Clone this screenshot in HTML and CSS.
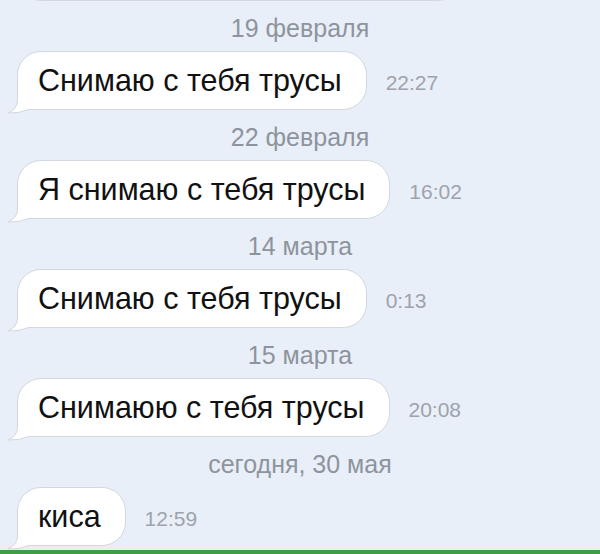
FILE: index.html
```html
<!DOCTYPE html>
<html lang="ru">
<head>
  <meta charset="UTF-8">
  <meta name="viewport" content="width=device-width, initial-scale=1.0">
  <title>Сообщения</title>
  <link rel="stylesheet" href="styles.css">
</head>
<body>
  <div class="chat">
    <div class="row row-prev">
      <div class="bubble bubble-prev"><span class="text">&nbsp;</span></div>
    </div>

    <div class="date">19 февраля</div>
    <div class="row">
      <div class="bubble">
        <svg class="tail" viewBox="0 0 40 36" width="40" height="36"><path class="tail-fill" d="M10.5 4 L10.5 22 Q10.5 31 1 35 Q12 35.5 22 31.5 L36 31.5 L36 4 Z"/><path class="tail-line" d="M10.5 4 L10.5 22 Q10.5 31 1 35 Q12 35.5 22 31.5 L36 31.5"/></svg>
        <span class="text">Снимаю с тебя трусы</span>
      </div>
      <span class="time">22:27</span>
    </div>

    <div class="date">22 февраля</div>
    <div class="row">
      <div class="bubble">
        <svg class="tail" viewBox="0 0 40 36" width="40" height="36"><path class="tail-fill" d="M10.5 4 L10.5 22 Q10.5 31 1 35 Q12 35.5 22 31.5 L36 31.5 L36 4 Z"/><path class="tail-line" d="M10.5 4 L10.5 22 Q10.5 31 1 35 Q12 35.5 22 31.5 L36 31.5"/></svg>
        <span class="text">Я снимаю с тебя трусы</span>
      </div>
      <span class="time">16:02</span>
    </div>

    <div class="date">14 марта</div>
    <div class="row">
      <div class="bubble">
        <svg class="tail" viewBox="0 0 40 36" width="40" height="36"><path class="tail-fill" d="M10.5 4 L10.5 22 Q10.5 31 1 35 Q12 35.5 22 31.5 L36 31.5 L36 4 Z"/><path class="tail-line" d="M10.5 4 L10.5 22 Q10.5 31 1 35 Q12 35.5 22 31.5 L36 31.5"/></svg>
        <span class="text">Снимаю с тебя трусы</span>
      </div>
      <span class="time">0:13</span>
    </div>

    <div class="date">15 марта</div>
    <div class="row">
      <div class="bubble">
        <svg class="tail" viewBox="0 0 40 36" width="40" height="36"><path class="tail-fill" d="M10.5 4 L10.5 22 Q10.5 31 1 35 Q12 35.5 22 31.5 L36 31.5 L36 4 Z"/><path class="tail-line" d="M10.5 4 L10.5 22 Q10.5 31 1 35 Q12 35.5 22 31.5 L36 31.5"/></svg>
        <span class="text">Снимаюю с тебя трусы</span>
      </div>
      <span class="time">20:08</span>
    </div>

    <div class="date">сегодня, 30 мая</div>
    <div class="row">
      <div class="bubble">
        <svg class="tail" viewBox="0 0 40 36" width="40" height="36"><path class="tail-fill" d="M10.5 4 L10.5 22 Q10.5 31 1 35 Q12 35.5 22 31.5 L36 31.5 L36 4 Z"/><path class="tail-line" d="M10.5 4 L10.5 22 Q10.5 31 1 35 Q12 35.5 22 31.5 L36 31.5"/></svg>
        <span class="text">киса</span>
      </div>
      <span class="time">12:59</span>
    </div>
  </div>
  <div class="input-edge"></div>
</body>
</html>
```

FILE: styles.css
```css
:root {
  --bg: #e9eff8;
  --bubble-border: #d3d7de;
  --date: #8e949d;
  --time: #9ea3ab;
}

html, body { height: 100%; }

body {
  margin: 0;
  background: var(--bg);
  font-family: "Liberation Sans", Arial, sans-serif;
  color: #111;
  overflow: hidden;
  display: flex;
  flex-direction: column;
}

.chat {
  flex: 1;
  display: flex;
  flex-direction: column;
  padding-left: 17px;
}

.row { display: flex; align-items: center; gap: 19px; }
.row-prev { margin-top: -58px; }

.date {
  align-self: center;
  padding: 14px 0 10px 0;
  margin-left: -17px;
  font-size: 25px;
  line-height: 26px;
  color: var(--date);
}

.bubble {
  position: relative;
  background: #fff;
  border: 1px solid var(--bubble-border);
  border-radius: 24px;
  padding: 13px 24px 13px 20px;
}
.bubble-prev { width: 399px; }

.text {
  position: relative;
  display: block;
  font-size: 30.5px;
  line-height: 31px;
  white-space: nowrap;
}

.tail {
  position: absolute;
  left: -11px;
  bottom: -5px;
  display: block;
}
.tail-fill { fill: #fff; }
.tail-line { fill: none; stroke: var(--bubble-border); stroke-width: 1; }

.time {
  font-size: 21px;
  color: var(--time);
  padding-top: 5px;
}

.input-edge {
  height: 7px;
  flex: none;
  background: linear-gradient(#e6f3e2 0, #e6f3e2 3px, #3f9e45 3px);
}
```
